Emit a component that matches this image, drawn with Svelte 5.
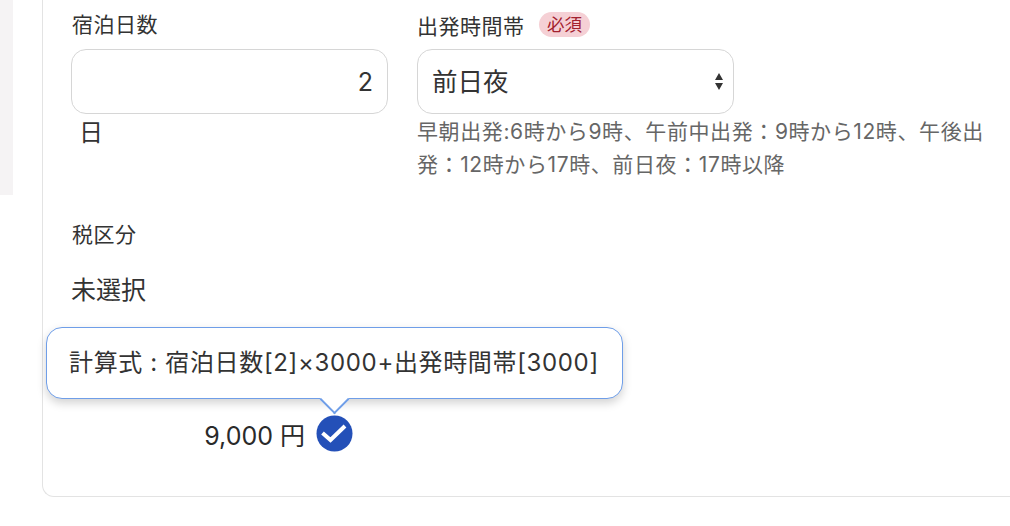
<script>
  let days = $state(2);
  let slot = $state("前日夜");
  const slots = ["早朝出発", "午前中出発", "午後出発", "前日夜"];
  let amount = $derived((days * 3000 + 3000).toLocaleString("en-US"));
</script>

<div class="page">
  <aside class="side"></aside>
  <main class="card">
    <div class="fields">
      <div class="field">
        <div class="label first">宿泊日数</div>
        <input class="box num" type="text" bind:value={days} />
        <div class="unit">日</div>
      </div>
      <div class="field wide">
        <div class="label">出発時間帯 <span class="req">必須</span></div>
        <div class="selectWrap">
          <select class="box sel" bind:value={slot}>
            {#each slots as s}
              <option value={s}>{s}</option>
            {/each}
          </select>
          <svg class="arrows" width="8" height="17" viewBox="0 0 8 17">
            <path d="M4 0 L8 7 H0 Z M0 10 H8 L4 17 Z" fill="#333" />
          </svg>
        </div>
        <p class="help">早朝出発:6時から9時、午前中出発：9時から12時、午後出発：12時から17時、前日夜：17時以降</p>
      </div>
    </div>

    <div class="tax">
      <div class="label first small">税区分</div>
      <div class="taxValue">未選択</div>
    </div>

    <div class="result">
      <div class="tip">
        計算式 : 宿泊日数[2]×3000+出発時間帯[3000]
        <span class="tipArrow"></span>
      </div>
      <span class="price">{amount} 円</span>
      <svg class="check" width="37" height="37" viewBox="0 0 37 37">
        <circle cx="18.5" cy="18.5" r="18" fill="#2450b8" />
        <path d="M6.5 18 L14.5 25 L29 11" fill="none" stroke="#fff" stroke-width="4" />
      </svg>
    </div>
  </main>
</div>

<style>
  :global(body) {
    margin: 0;
    background: #fff;
    overflow: hidden;
  }
  .page {
    display: flex;
    height: 526px;
    font-family: "Inter", "Noto Sans CJK JP", sans-serif;
    color: #333;
    overflow: hidden;
  }
  .side {
    width: 13px;
    height: 195px;
    background: #f5f3f4;
    flex: none;
  }
  .card {
    box-sizing: border-box;
    width: 1000px;
    flex: none;
    height: 497px;
    margin-left: 29px;
    padding: 12px 0 0 28px;
    border-left: 1px solid #e3e3e3;
    border-bottom: 1px solid #e3e3e3;
    border-bottom-left-radius: 12px;
  }
  .fields {
    display: flex;
    gap: 29px;
  }
  .field {
    width: 317px;
    flex: none;
  }
  .field.wide {
    width: 572px;
  }
  .label {
    font-size: 21px;
    line-height: 26px;
    margin-bottom: 11px;
    letter-spacing: 0.5px;
    height: 26px;
  }
  .label.first {
    padding-left: 1px;
  }
  .label.small {
    margin-bottom: 0;
  }
  .req {
    display: inline-block;
    vertical-align: 3px;
    margin-left: 8px;
    padding: 0 8px;
    background: #f5d0d5;
    color: #a3212f;
    border-radius: 12.5px;
    font-size: 17.5px;
    line-height: 25px;
    letter-spacing: 0;
  }
  .box {
    box-sizing: border-box;
    display: block;
    width: 317px;
    height: 65px;
    border: 1px solid #d6d6d6;
    border-radius: 15px;
    background: #fff;
    font-family: inherit;
    color: #333;
    outline: none;
  }
  .num {
    text-align: right;
    font-size: 25px;
    padding: 0 14px;
  }
  .unit {
    font-size: 24px;
    line-height: 38px;
    padding-left: 8px;
  }
  .selectWrap {
    position: relative;
    width: 317px;
  }
  .sel {
    appearance: none;
    font-size: 25.5px;
    padding: 0 14px;
  }
  .arrows {
    position: absolute;
    right: 11px;
    top: 24px;
    pointer-events: none;
  }
  .help {
    margin: 1px 0 0;
    font-size: 21px;
    line-height: 33px;
    letter-spacing: 0.6px;
    color: #666;
    width: 572px;
  }
  .tax {
    margin-top: 41px;
  }
  .taxValue {
    font-size: 25px;
    line-height: 36px;
    margin-top: 24px;
  }
  .result {
    position: relative;
    margin-top: 107px;
    width: 282px;
    display: flex;
    align-items: center;
    justify-content: flex-end;
    gap: 11px;
    height: 37px;
  }
  .price {
    font-size: 25px;
    color: #2a2a2a;
  }
  .tip {
    position: absolute;
    left: -25px;
    bottom: 53px;
    box-sizing: border-box;
    width: 577px;
    height: 72px;
    line-height: 70px;
    padding-left: 22px;
    font-size: 24px;
    letter-spacing: 0.65px;
    white-space: nowrap;
    background: #fff;
    border: 1px solid #6f9ee8;
    border-radius: 16px;
    box-shadow: 0 4px 10px rgba(0, 0, 0, 0.18);
  }
  .tipArrow {
    position: absolute;
    left: 276.5px;
    bottom: -11.5px;
    width: 21px;
    height: 21px;
    background: #fff;
    border-right: 2px solid #6f9ee8;
    border-bottom: 2px solid #6f9ee8;
    transform: rotate(45deg);
    box-sizing: border-box;
  }
  .check {
    flex: none;
  }
</style>
